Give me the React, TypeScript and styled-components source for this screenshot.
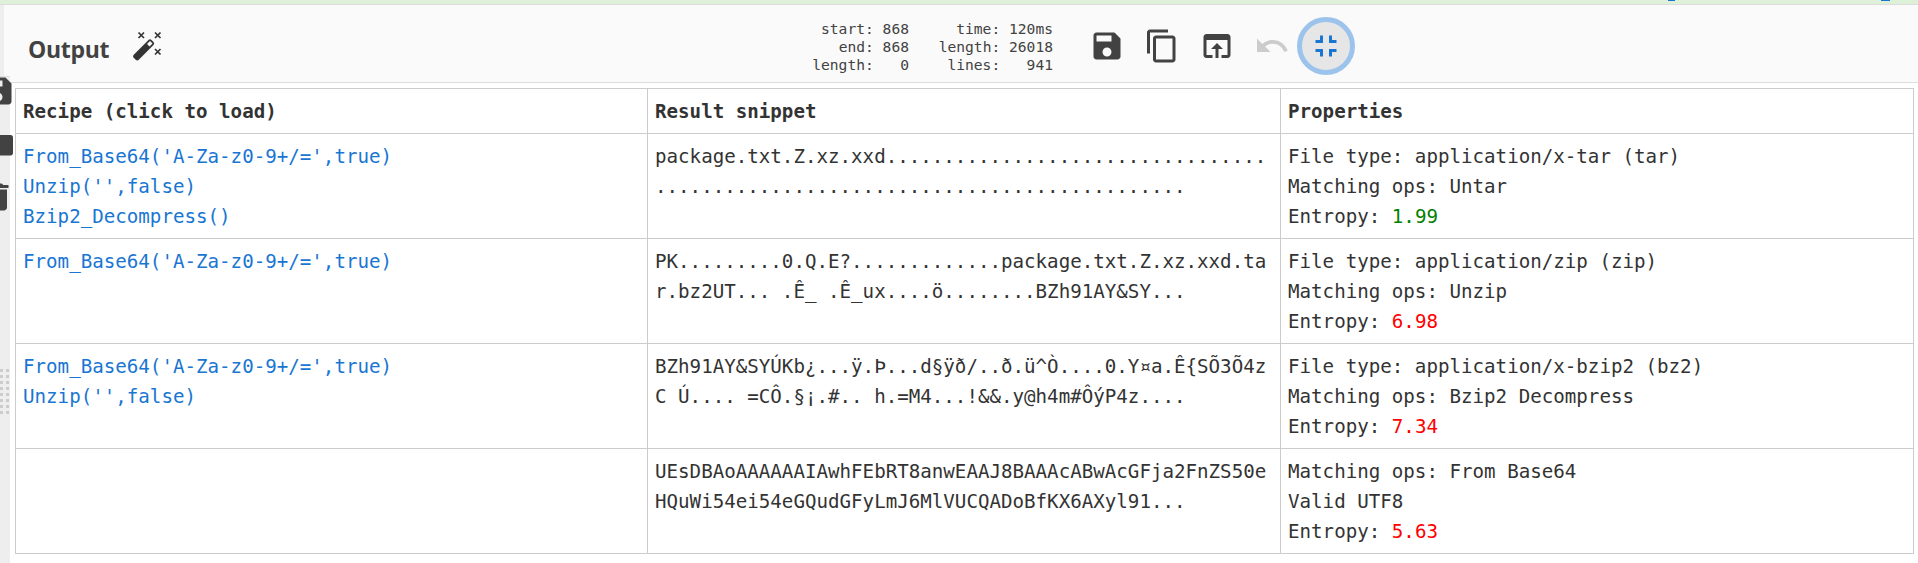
import React from "react";
import styled, { createGlobalStyle } from "styled-components";

const Global = createGlobalStyle`
  * { box-sizing: border-box; }
  html, body { margin: 0; overflow: hidden; background: #fff; }
`;

const mono = `"DejaVu Sans Mono", monospace`;

const Page = styled.div`
  width: 1918px;
  height: 563px;
  display: flex;
  flex-direction: column;
  position: relative;
  overflow: hidden;
`;

const Banner = styled.div`
  height: 5px;
  flex: none;
  background: #dff0d8;
  border-bottom: 1px solid #ddd;
`;

const BannerTrace = styled.span<{ $left: number; $width: number }>`
  position: absolute;
  top: 0;
  left: ${(p) => p.$left}px;
  width: ${(p) => p.$width}px;
  height: 1px;
  background: #1976d2;
`;

const TitleBar = styled.header`
  height: 78px;
  flex: none;
  display: flex;
  align-items: center;
  background: #fafafa;
  border-left: 4px solid #eee;
  border-bottom: 1px solid #ddd;
`;

const Title = styled.h1`
  margin: 11px 0 0 24px;
  width: 103px;
  font: 700 23px/30px "Open Sans", "Noto Sans", sans-serif;
  letter-spacing: -0.3px;
  color: #424242;
`;

const WandIcon = styled.svg`
  width: 32px;
  height: 32px;
  margin-top: 4px;
  color: #333;
`;

const Stats = styled.pre<{ $width: number }>`
  margin: 6px 0 0;
  width: ${(p) => p.$width}px;
  text-align: right;
  font: 14.61px/18px ${mono};
  color: #424242;
`;

const StatsGroup = styled.div`
  display: flex;
  margin-left: 649px;
`;

const Actions = styled.div`
  display: flex;
  align-items: center;
  margin: 5px 0 0 26px;
`;

const IconButton = styled.button<{ $disabled?: boolean; $active?: boolean }>`
  width: ${(p) => (p.$active ? 58 : 55)}px;
  height: 58px;
  margin-left: ${(p) => (p.$active ? -2 : 0)}px;
  padding: 0;
  display: grid;
  place-items: center;
  background: ${(p) => (p.$active ? "#e6e6e6" : "none")};
  border: ${(p) => (p.$active ? "5px solid #9cc3eb" : "0")};
  border-radius: ${(p) => (p.$active ? "50%" : "0")};
  color: ${(p) => (p.$active ? "#1976d2" : p.$disabled ? "#ccc" : "#424242")};
  svg { width: 36px; height: 36px; fill: currentColor; display: block; }
`;

const Body = styled.main`
  flex: 1;
  border-left: 10px solid #eee;
  padding: 5px 4px 0 5px;
`;

const Table = styled.table`
  width: 1899px;
  table-layout: fixed;
  border-collapse: collapse;
  font: 19.177px/30px ${mono};
  color: #333;
`;

const Column = styled.col<{ $width: number }>`
  width: ${(p) => p.$width}px;
`;

const Row = styled.tr<{ $head?: boolean }>`
  height: ${(p) => (p.$head ? 45 : 105)}px;
`;

const HeadCell = styled.th`
  border: 1px solid #ccc;
  padding: 8px 7px 6px;
  text-align: left;
  font-weight: 700;
`;

const Cell = styled.td`
  border: 1px solid #ccc;
  padding: 8px 7px 6px;
  vertical-align: top;
  white-space: pre;
`;

const RecipeLink = styled.a`
  color: #1976d2;
  text-decoration: none;
`;

const Entropy = styled.span<{ $low?: boolean }>`
  color: ${(p) => (p.$low ? "green" : "red")};
`;

const Overflow = styled.svg<{ $left: number; $top: number }>`
  position: absolute;
  left: ${(p) => p.$left}px;
  top: ${(p) => p.$top}px;
  width: 36px;
  height: 36px;
  fill: #424242;
`;

const PaneEdge = styled.div`
  position: absolute;
  left: 0;
  top: 76px;
  width: 10px;
  height: 7px;
  background: #eee;
  border-top: 1px solid #ddd;
`;

const Gutter = styled.div`
  position: absolute;
  left: 0;
  top: 369px;
  width: 9px;
  height: 45px;
  display: grid;
  grid-template-columns: 3px 3px;
  grid-auto-rows: 3px;
  gap: 3px;
  span { background: #ccc; }
`;

const savePath =
  "M17 3H5c-1.11 0-2 .9-2 2v14c0 1.1.89 2 2 2h14c1.1 0 2-.9 2-2V7l-4-4zm-5 16c-1.66 0-3-1.34-3-3s1.34-3 3-3 3 1.34 3 3-1.34 3-3 3zm3-10H5V5h10v4z";

const rows = [
  {
    recipe: "From_Base64('A-Za-z0-9+/=',true)\nUnzip('',false)\nBzip2_Decompress()",
    snippet: "package.txt.Z.xz.xxd" + ".".repeat(33) + "\n" + ".".repeat(46),
    props: "File type: application/x-tar (tar)\nMatching ops: Untar",
    entropy: "1.99",
    low: true,
  },
  {
    recipe: "From_Base64('A-Za-z0-9+/=',true)",
    snippet:
      "PK.........0.Q.E?.............package.txt.Z.xz.xxd.ta\nr.bz2UT... .Ê_ .Ê_ux....ö........BZh91AY&SY...",
    props: "File type: application/zip (zip)\nMatching ops: Unzip",
    entropy: "6.98",
  },
  {
    recipe: "From_Base64('A-Za-z0-9+/=',true)\nUnzip('',false)",
    snippet:
      "BZh91AY&SYÚKb¿...ÿ.Þ...d§ÿð/..ð.ü^Ò....0.Y¤a.Ê{SÕ3Õ4z\nC Ú.... =CÔ.§¡.#.. h.=M4...!&&.y@h4m#ÔýP4z....",
    props: "File type: application/x-bzip2 (bz2)\nMatching ops: Bzip2 Decompress",
    entropy: "7.34",
  },
  {
    recipe: "",
    snippet:
      "UEsDBAoAAAAAAIAwhFEbRT8anwEAAJ8BAAAcABwAcGFja2FnZS50e\nHQuWi54ei54eGQudGFyLmJ6MlVUCQADoBfKX6AXyl91...",
    props: "Matching ops: From Base64\nValid UTF8",
    entropy: "5.63",
  },
];

export default function App() {
  return (
    <Page>
      <Global />
      <Banner />
      <BannerTrace $left={1668} $width={7} />
      <BannerTrace $left={1881} $width={9} />
      <TitleBar>
        <Title>Output</Title>
        <WandIcon viewBox="0 0 32 32">
          <path
            fill="currentColor"
            d="M2.5 25 L17.5 10 Q19 8.500 20.500 10 L22.500 12 Q24 13.500 22.500 15 L7.500 30 Q6 31 4.700 29.700 L2.500 27.500 Q1.500 26.300 2.500 25z"
          />
          <path fill="#fafafa" d="M16 14 L19 11 L21.500 13.500 L18.500 16.500z" />
          <g stroke="currentColor" strokeWidth="1.7">
            <path d="M7.500 2.500l5.500 5.500m0-5.500l-5.500 5.500M24 2.500l5.500 5.500m0-5.500l-5.500 5.500M24 19l5.500 5.500m0-5.500l-5.500 5.500" />
          </g>
        </WandIcon>
        <StatsGroup>
          <Stats $width={97}>{"start: 868\nend: 868\nlength:   0"}</Stats>
          <Stats $width={144}>{"time: 120ms\nlength: 26018\nlines:   941"}</Stats>
        </StatsGroup>
        <Actions>
          <IconButton>
            <svg viewBox="0 0 24 24"><path d={savePath} /></svg>
          </IconButton>
          <IconButton>
            <svg viewBox="0 0 24 24">
              <path d="M16 1H4c-1.1 0-2 .9-2 2v14h2V3h12V1zm3 4H8c-1.1 0-2 .9-2 2v14c0 1.1.9 2 2 2h11c1.1 0 2-.9 2-2V7c0-1.1-.9-2-2-2zm0 16H8V7h11v14z" />
            </svg>
          </IconButton>
          <IconButton>
            <svg viewBox="0 0 24 24">
              <path d="M19 4H5c-1.110 0-2 .9-2 2v12c0 1.100.89 2 2 2h4v-2H5V8h14v10h-4v2h4c1.100 0 2-.9 2-2V6c0-1.100-.89-2-2-2zm-7 6l-4 4h3v6h2v-6h3l-4-4z" />
            </svg>
          </IconButton>
          <IconButton $disabled>
            <svg viewBox="0 0 24 24">
              <path d="M12.500 8c-2.650 0-5.050.99-6.900 2.600L2 7v9h9l-3.620-3.620c1.390-1.160 3.160-1.880 5.120-1.880 3.540 0 6.550 2.310 7.600 5.500l2.370-.78C21.080 11.030 17.150 8 12.500 8z" />
            </svg>
          </IconButton>
          <IconButton $active>
            <svg viewBox="0 0 24 24">
              <path d="M5 16h3v3h2v-5H5v2zm3-8H5v2h5V5H8v3zm6 11h2v-3h3v-2h-5v5zm2-11V5h-2v5h5V8h-3z" />
            </svg>
          </IconButton>
        </Actions>
      </TitleBar>
      <Body>
        <Table>
          <colgroup>
            <Column $width={632} />
            <Column $width={633} />
            <Column $width={633} />
          </colgroup>
          <thead>
            <Row $head>
              <HeadCell>Recipe (click to load)</HeadCell>
              <HeadCell>Result snippet</HeadCell>
              <HeadCell>Properties</HeadCell>
            </Row>
          </thead>
          <tbody>
            {rows.map((r) => (
              <Row key={r.entropy}>
                <Cell><RecipeLink>{r.recipe}</RecipeLink></Cell>
                <Cell>{r.snippet}</Cell>
                <Cell>
                  {r.props}
                  {"\nEntropy: "}
                  <Entropy $low={r.low}>{r.entropy}</Entropy>
                </Cell>
              </Row>
            ))}
          </tbody>
        </Table>
      </Body>
      <PaneEdge />
      <Overflow viewBox="0 0 24 24" $left={-20} $top={73}><path d={savePath} /></Overflow>
      <Overflow viewBox="0 0 24 24" $left={-20} $top={127}>
        <path d="M10 5.300H4c-1.100 0-2 .9-2 2V17c0 1.100.9 2 2 2h16.500c.8 0 1.500-.7 1.500-1.500V6.800c0-.8-.7-1.500-1.500-1.500z" />
      </Overflow>
      <Overflow viewBox="0 0 24 24" $left={-20} $top={179}>
        <path d="M6 19c0 1.100.9 2 2 2h8c1.100 0 2-.9 2-2V7H6v12zM19 4h-3.500l-1-1h-5l-1 1H5v2h14V4z" />
      </Overflow>
      <Gutter>{Array.from({ length: 16 }, (_, i) => <span key={i} />)}</Gutter>
    </Page>
  );
}
